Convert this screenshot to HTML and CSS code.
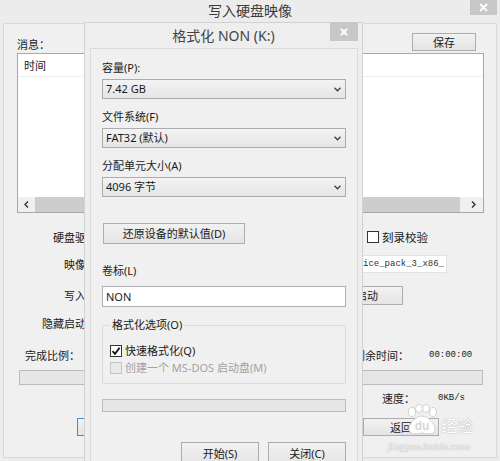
FILE: index.html
```html
<!DOCTYPE html>
<html lang="zh-CN">
<head>
<meta charset="utf-8">
<title>写入硬盘映像</title>
<link rel="stylesheet" href="styles.css">
</head>
<body>
<div class="bgwin">
  <div class="bg-titlebar">
    <span class="bg-title">写入硬盘映像</span>
    <div class="bg-close"><svg width="9" height="9" viewBox="0 0 9 9"><path d="M1 1L8 8M8 1L1 8" stroke="#fff" stroke-width="1.8"/></svg></div>
  </div>
  <div class="bg-client">
    <div class="msg-row">
      <span class="msg-label">消息：</span>
      <div class="wbtn save-btn">保存</div>
    </div>
    <div class="listbox">
      <div class="lb-header">时间</div>
      <div class="lb-body"></div>
      <div class="hscroll">
        <div class="sb-arrow sb-left"><svg width="5" height="7" viewBox="0 0 5 7"><path d="M4 0.5L1 3.5L4 6.5" fill="none" stroke="#333" stroke-width="1.4"/></svg></div>
        <div class="sb-track"><div class="sb-thumb"></div></div>
        <div class="sb-arrow sb-right"><svg width="5" height="7" viewBox="0 0 5 7"><path d="M1 0.5L4 3.5L1 6.5" fill="none" stroke="#333" stroke-width="1.4"/></svg></div>
      </div>
    </div>
    <div class="frow r1">
      <span class="fl">硬盘驱动器：</span>
      <div class="wcombo w230"></div>
      <span class="wchk"></span><span class="chk-text">刻录校验</span>
    </div>
    <div class="frow r2">
      <span class="fl">映像文件：</span>
      <div class="wfield"><span class="mono field-text">windows_xp_professional_with_service_pack_3_x86_</span></div>
    </div>
    <div class="frow r3">
      <span class="fl">写入方式：</span>
      <div class="wcombo w174"></div>
      <div class="wbtn boot-btn">便捷启动</div>
    </div>
    <div class="frow r4">
      <span class="fl">隐藏启动分区：</span>
      <div class="wcombo w174"></div>
    </div>
    <div class="status-row">
      <span class="st-a">完成比例：</span>
      <span class="st-b">剩余时间：</span>
      <span class="mono st-c">00:00:00</span>
    </div>
    <div class="wprogress"></div>
    <div class="speed-row">
      <span class="sp-a">速度：</span>
      <span class="mono">0KB/s</span>
    </div>
    <div class="bottom-btns">
      <div class="wbtn bbtn focused">写入</div>
      <div class="wbtn bbtn">终止</div>
      <div class="wbtn bbtn">格式化</div>
      <div class="wbtn bbtn">返回</div>
    </div>
  </div>
</div>

<div class="watermark">
  <div class="wm-top">
    <svg class="wm-paw" width="36" height="32" viewBox="0 0 36 32">
      <ellipse cx="9" cy="8" rx="3.5" ry="4.5" fill="#fff" stroke="#d2d2d2"/>
      <ellipse cx="16" cy="4.5" rx="3.5" ry="4" fill="#fff" stroke="#d2d2d2"/>
      <ellipse cx="23" cy="4.5" rx="3.5" ry="4" fill="#fff" stroke="#d2d2d2"/>
      <ellipse cx="30" cy="8" rx="3.5" ry="4.5" fill="#fff" stroke="#d2d2d2"/>
      <path d="M19 12C13 12 5 20 6 26C7 31 13 30 19 29C25 30 31 31 32 26C33 20 25 12 19 12Z" fill="#fff" stroke="#d2d2d2"/>
      <text x="19" y="26" text-anchor="middle" class="wm-du">du</text>
    </svg>
    <span class="wm-jy">经验</span>
  </div>
  <div class="wm-url">jingyan.baidu.com</div>
</div>

<div class="dialog">
  <div class="dlg-titlebar">
    <span class="dlg-title">格式化 NON (K:)</span>
    <div class="dlg-close"><svg width="8" height="8" viewBox="0 0 8 8"><path d="M0.7 0.7L7.3 7.3M7.3 0.7L0.7 7.3" stroke="#fff" stroke-width="1.8"/></svg></div>
  </div>
  <div class="dlg-client">
    <div class="lbl first">容量(P):</div>
    <div class="combo"><span>7.42 GB</span><svg class="chev" width="7" height="5" viewBox="0 0 7 5"><path d="M0.5 0.8L3.5 3.8L6.5 0.8" fill="none" stroke="#404040" stroke-width="1.3"/></svg></div>
    <div class="lbl">文件系统(F)</div>
    <div class="combo"><span>FAT32 (默认)</span><svg class="chev" width="7" height="5" viewBox="0 0 7 5"><path d="M0.5 0.8L3.5 3.8L6.5 0.8" fill="none" stroke="#404040" stroke-width="1.3"/></svg></div>
    <div class="lbl">分配单元大小(A)</div>
    <div class="combo"><span>4096 字节</span><svg class="chev" width="7" height="5" viewBox="0 0 7 5"><path d="M0.5 0.8L3.5 3.8L6.5 0.8" fill="none" stroke="#404040" stroke-width="1.3"/></svg></div>
    <div class="btn restore-btn">还原设备的默认值(D)</div>
    <div class="lbl vol-lbl">卷标(L)</div>
    <div class="textbox">NON</div>
    <fieldset class="group">
      <legend>格式化选项(O)</legend>
      <div class="opt"><span class="cb checked"><svg width="10" height="10" viewBox="0 0 10 10"><path d="M1.5 5.2L4 7.8L8.6 1.8" fill="none" stroke="#111" stroke-width="1.8"/></svg></span><span>快速格式化(Q)</span></div>
      <div class="opt disabled"><span class="cb"></span><span>创建一个 MS-DOS 启动盘(M)</span></div>
    </fieldset>
    <div class="progress"></div>
    <div class="dlg-buttons">
      <div class="btn dbtn">开始(S)</div>
      <div class="btn dbtn">关闭(C)</div>
    </div>
  </div>
</div>
</body>
</html>
```

FILE: styles.css
```css
* { box-sizing: border-box; margin: 0; padding: 0; }
html, body { width: 500px; height: 461px; overflow: hidden; }
body {
  background: #ececec;
  font-family: "Noto Sans", "Noto Sans CJK SC", sans-serif;
  font-size: 11px;
  color: #1a1a1a;
  position: relative;
}
.mono { font-family: "Liberation Mono", "DejaVu Sans Mono", monospace; font-size: 9px; white-space: nowrap; }

/* ---------- background window ---------- */
.bgwin { height: 461px; display: flex; flex-direction: column; }
.bg-titlebar { height: 23px; position: relative; display: flex; justify-content: center; align-items: flex-start; padding-top: 1px; }
.bg-title { font-size: 14px; line-height: 19px; color: #3a3a3a; font-family: "Noto Sans CJK SC", sans-serif; }
.bg-close {
  position: absolute; top: 0; right: 3px; width: 27px; height: 15px;
  background: #c7c7c7; display: flex; align-items: center; justify-content: center;
}
.bg-client {
  margin: 0 3px; height: 435px; border: 1px solid #d9d9d9; background: #f0f0f0;
  padding: 9px 12px 0 13px; display: flex; flex-direction: column;
  font-family: "Noto Sans CJK SC", sans-serif;
}
.msg-row { height: 18px; display: flex; justify-content: space-between; align-items: flex-end; }
.msg-label { line-height: 14px; }
.wbtn {
  border: 1px solid #adadad; background: linear-gradient(#f2f2f2, #e4e4e4);
  display: flex; align-items: center; justify-content: center; line-height: 14px;
}
.save-btn { width: 64px; height: 18px; margin-right: 8px; }
.listbox {
  margin-top: 2px; height: 160px; border: 1px solid #a8a8a8; background: #fff;
  display: flex; flex-direction: column;
}
.lb-header { height: 23px; line-height: 22px; padding-left: 6px; border-bottom: 1px solid #edf2f9; }
.lb-body { flex: 1; }
.hscroll { height: 15px; display: flex; background: #f0f0f0; }
.sb-arrow { display: flex; align-items: center; justify-content: center; }
.sb-left { width: 17px; }
.sb-right { width: 20px; }
.sb-track { flex: 1; padding-right: 3px; display: flex; }
.sb-thumb { flex: 1; background: #cdcdcd; }

.frow { display: flex; align-items: center; }
.fl { width: 102px; flex: none; text-align: right; margin-right: 7px; line-height: 14px; }
.r1 { margin-top: 13px; height: 22px; }
.r2 { margin-top: 6px; height: 20px; }
.r3 { margin-top: 11px; height: 20px; }
.r4 { margin-top: 8px; height: 20px; }
.wcombo { height: 20px; border: 1px solid #acacac; background: linear-gradient(#f2f2f2, #e6e6e6); }
.w230 { width: 230px; }
.w174 { width: 174px; }
.wchk { width: 12px; height: 12px; border: 1px solid #333; background: #fff; margin-left: 11px; }
.chk-text { margin-left: 3px; line-height: 14px; font-size: 11.5px; }
.wfield {
  width: 321px; height: 18px; background: #fff; border: 1px solid #e2e2e2;
  display: flex; justify-content: flex-end; align-items: center; overflow: hidden; padding-right: 2px;
  color: #333;
}
.field-text { font-size: 9px; }
.boot-btn { width: 94px; height: 19px; margin-left: 9px; }
.status-row { margin-top: 14px; height: 16px; display: flex; align-items: center; padding-left: 8px; line-height: 14px; }
.st-a { width: 329px; flex: none; }
.st-b { width: 75px; flex: none; }
.wprogress { margin: 7px 0 0 2px; width: 464px; height: 15px; background: #e6e6e6; border: 1px solid #bcbcbc; }
.speed-row { margin-top: 5px; height: 16px; display: flex; align-items: center; padding-left: 365px; line-height: 14px; }
.sp-a { width: 56px; flex: none; }
.bottom-btns { margin: 12px 0 0 60px; width: 362px; height: 18px; display: flex; justify-content: space-between; }
.bbtn { width: 76px; height: 18px; }
.focused { border-color: #3c8fdc; }

/* ---------- watermark ---------- */
.watermark { position: absolute; left: 383px; top: 404px; width: 92px; display: flex; flex-direction: column; align-items: center; }
.wm-top { display: flex; align-items: flex-end; margin-left: 18px; }
.wm-du { font-family: "Liberation Sans", sans-serif; font-weight: bold; font-size: 12px; fill: #d6d6d6; }
.wm-jy {
  font-family: "Noto Sans CJK SC", sans-serif; font-size: 16px; line-height: 22px; color: #fff; margin-left: 2px;
  text-shadow: 0 0 1px #b0b0b0, 0 0 1px #b0b0b0;
}
.wm-url {
  font-family: "Liberation Serif", serif; font-size: 11px; line-height: 12px; color: #fff; margin-top: 4px;
  text-shadow: 0 0 1px #a8a8a8, 0 0 1px #a8a8a8;
}

/* ---------- format dialog ---------- */
.dialog {
  position: absolute; left: 84px; top: 22px; width: 279px; height: 450px;
  background: #eeeeee; border: 1px solid #d2d2d2;
  display: flex; flex-direction: column;
}
.dlg-titlebar { height: 25px; position: relative; display: flex; justify-content: center; align-items: center; }
.dlg-title { font-size: 14px; line-height: 25px; color: #444; }
.dlg-close {
  position: absolute; top: -1px; right: 4px; width: 28px; height: 19px;
  background: #c7c7c7; display: flex; align-items: center; justify-content: center;
}
.dlg-client {
  margin: 0 4px 0 5px; flex: 1; border: 1px solid #dadada; background: #f0f0f0;
  padding: 0 11px; display: flex; flex-direction: column;
}
.lbl { line-height: 14px; margin-top: 11px; }
.lbl.first { margin-top: 12px; }
.combo {
  margin-top: 4px; height: 20px; border: 1px solid #acacac; background: linear-gradient(#f3f3f3, #e5e5e5);
  display: flex; align-items: center; justify-content: space-between; padding: 0 4px 0 3px; line-height: 14px;
}
.chev { flex: none; }
.btn {
  border: 1px solid #adadad; background: linear-gradient(#f2f2f2, #e4e4e4);
  display: flex; align-items: center; justify-content: center; line-height: 14px;
}
.restore-btn { margin: 26px 0 0 1px; width: 142px; height: 21px; }
.vol-lbl { margin-top: 20px; }
.textbox {
  margin-top: 8px; height: 21px; border: 1px solid #abadb3; background: #fff;
  padding-left: 3px; display: flex; align-items: center; line-height: 14px;
}
.group { margin-top: 11px; border: 1px solid #dcdcdc; padding: 10px 7px 7px; }
.group legend { padding: 0 2px; line-height: 14px; }
.opt { height: 17px; display: flex; align-items: center; line-height: 14px; }
.cb {
  width: 12px; height: 12px; border: 1px solid #333; background: #fff; margin-right: 3px;
  display: flex; align-items: center; justify-content: center;
}
.opt.disabled { color: #a3a3a3; }
.opt.disabled .cb { border-color: #c4c4c4; background: #eaeaea; }
.progress { margin-top: 15px; height: 13px; border: 1px solid #bcbcbc; background: #e6e6e6; }
.dlg-buttons { margin-top: 30px; display: flex; justify-content: flex-end; gap: 9px; }
.dbtn { width: 78px; height: 23px; }
```
